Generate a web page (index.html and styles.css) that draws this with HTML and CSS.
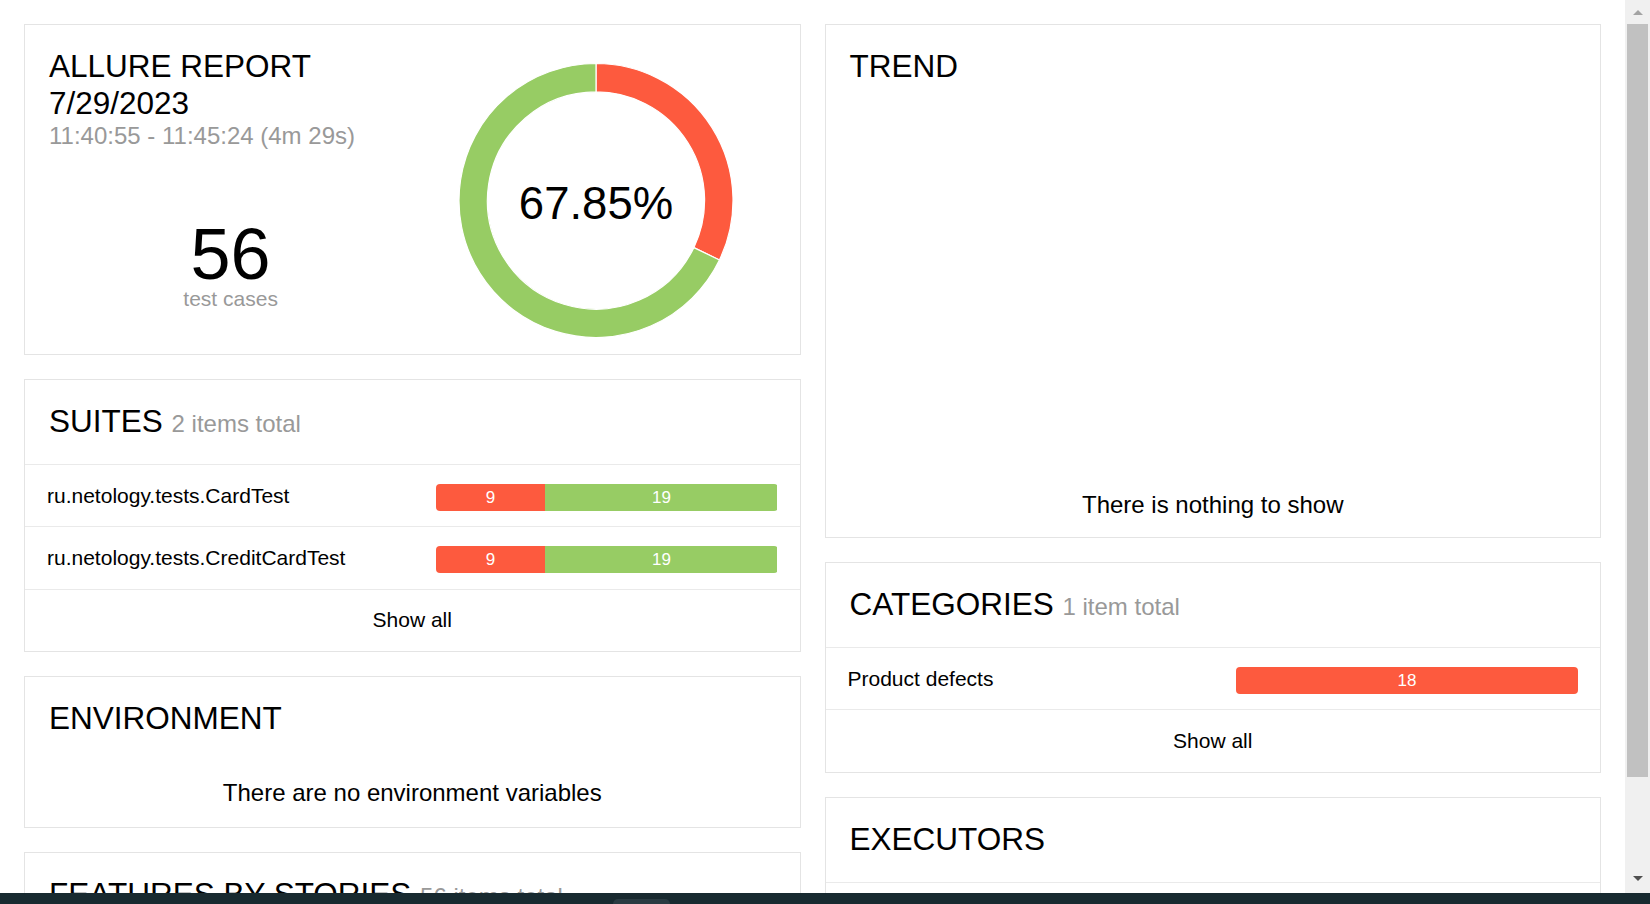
FILE: index.html
```html
<!DOCTYPE html>
<html lang="en">
<head>
<meta charset="utf-8">
<title>Allure Report</title>
<link rel="stylesheet" href="styles.css">
</head>
<body>
<div class="screen">
  <div class="viewport">
    <main class="content">
      <div class="col">
        <section class="card summary">
          <div class="summary__half summary__left">
            <h2 class="card__title">ALLURE REPORT<br>7/29/2023</h2>
            <div class="summary__time">11:40:55 - 11:45:24 (4m 29s)</div>
            <div class="summary__count">
              <div class="summary__num">56</div>
              <div class="summary__label">test cases</div>
            </div>
          </div>
          <div class="summary__half summary__right">
            <svg class="donut" width="363" height="290" viewBox="0 0 363 290">
              <path class="donut__failed" d="M184,15.5 A137,137 0 0,1 307.43,211.94 L281.85,199.62 A108.6,108.6 0 0,0 184,43.9 Z"/>
              <path class="donut__passed" d="M307.43,211.94 A137,137 0 1,1 184,15.5 L184,43.9 A108.6,108.6 0 1,0 281.85,199.62 Z"/>
              <text class="donut__text" x="184" y="171" text-anchor="middle">67.85%</text>
            </svg>
          </div>
        </section>

        <section class="card">
          <div class="card__head"><h2 class="card__title">SUITES <span class="card__sub">2 items total</span></h2></div>
          <div class="row">
            <div class="row__name">ru.netology.tests.CardTest</div>
            <div class="bar">
              <div class="bar__seg bar__seg--failed" style="width:32.14%">9</div>
              <div class="bar__seg bar__seg--passed" style="width:67.86%">19</div>
            </div>
          </div>
          <div class="row">
            <div class="row__name">ru.netology.tests.CreditCardTest</div>
            <div class="bar">
              <div class="bar__seg bar__seg--failed" style="width:32.14%">9</div>
              <div class="bar__seg bar__seg--passed" style="width:67.86%">19</div>
            </div>
          </div>
          <div class="row row--link">Show all</div>
        </section>

        <section class="card">
          <div class="card__head"><h2 class="card__title">ENVIRONMENT</h2></div>
          <div class="card__empty">There are no environment variables</div>
        </section>

        <section class="card">
          <div class="card__head"><h2 class="card__title">FEATURES BY STORIES <span class="card__sub">56 items total</span></h2></div>
          <div class="row">
            <div class="row__name">Credit card</div>
            <div class="bar">
              <div class="bar__seg bar__seg--failed" style="width:100%">1</div>
            </div>
          </div>
        </section>
      </div>

      <div class="col">
        <section class="card">
          <div class="card__head"><h2 class="card__title">TREND</h2></div>
          <div class="trend__body">There is nothing to show</div>
        </section>

        <section class="card">
          <div class="card__head"><h2 class="card__title">CATEGORIES <span class="card__sub">1 item total</span></h2></div>
          <div class="row">
            <div class="row__name">Product defects</div>
            <div class="bar">
              <div class="bar__seg bar__seg--failed" style="width:100%">18</div>
            </div>
          </div>
          <div class="row row--link">Show all</div>
        </section>

        <section class="card">
          <div class="card__head"><h2 class="card__title">EXECUTORS</h2></div>
          <div class="row row--link">There is no information about tests executors</div>
        </section>
      </div>
    </main>

    <div class="scrollbar">
      <div class="scrollbar__btn"><span class="scrollbar__up"></span></div>
      <div class="scrollbar__thumb"></div>
      <div class="scrollbar__track"></div>
      <div class="scrollbar__btn scrollbar__btn--down"><span class="scrollbar__down"></span></div>
    </div>
  </div>
  <div class="taskbar"><div class="taskbar__tab"></div></div>
</div>
</body>
</html>
```

FILE: styles.css
```css
* {
  box-sizing: border-box;
}

html,
body {
  margin: 0;
  padding: 0;
  background: #fff;
}

body {
  font-family: "Liberation Sans", Arial, sans-serif;
  color: #000;
  font-size: 21px;
  line-height: 28px;
}

.screen {
  width: 1650px;
  height: 904px;
  display: flex;
  flex-direction: column;
  overflow: hidden;
}

.viewport {
  height: 893px;
  display: flex;
  flex: none;
}

.content {
  flex: 1;
  min-width: 0;
  overflow: hidden;
  display: grid;
  grid-template-columns: 1fr 1fr;
  column-gap: 24px;
  padding: 24px 24px 0;
  align-items: start;
}

.col {
  display: flex;
  flex-direction: column;
  gap: 24px;
}

.card {
  background: #fff;
  border: 1px solid #e4e4e4;
}

.card__head {
  padding: 23px 24px 24px;
}

.card__title {
  margin: 0;
  font-size: 31.5px;
  line-height: 37px;
  font-weight: normal;
  color: #000;
}

.card__sub {
  font-size: 24px;
  line-height: 1;
  color: #999;
}

/* summary */
.summary {
  display: flex;
  padding: 23px 24px 16px;
}

.summary__half {
  flex: 1 1 0;
  min-width: 0;
}

.summary__time {
  font-size: 24px;
  line-height: 28px;
  color: #999;
  white-space: nowrap;
}

.summary__count {
  margin-top: 68px;
  text-align: center;
}

.summary__num {
  font-size: 72px;
  line-height: 72px;
}

.summary__label {
  font-size: 21px;
  line-height: 18px;
  color: #999;
}

.donut {
  display: block;
}

.donut__failed {
  fill: #fd5a3e;
  stroke: #fff;
  stroke-width: 1.2;
}

.donut__passed {
  fill: #97cc64;
  stroke: #fff;
  stroke-width: 1.2;
}

.donut__text {
  font-family: "Liberation Sans", Arial, sans-serif;
  font-size: 45.5px;
  fill: #000;
}

/* rows */
.row {
  border-top: 1px solid #eaeaea;
  height: 62.33px;
  padding: 0 22px;
  display: flex;
  align-items: center;
  justify-content: space-between;
  font-size: 21px;
  line-height: 28px;
}

.row__name {
  white-space: nowrap;
}

.row--link {
  justify-content: center;
}

.bar {
  width: 342px;
  height: 27px;
  flex: none;
  display: flex;
  border-radius: 4px;
  overflow: hidden;
  margin-top: 3px;
}

.bar__seg {
  height: 100%;
  color: #fff;
  font-size: 17px;
  line-height: 27px;
  text-align: center;
}

.bar__seg--failed {
  background: #fd5a3e;
}

.bar__seg--passed {
  background: #97cc64;
}

.card__empty {
  text-align: center;
  font-size: 24px;
  line-height: 28px;
  padding: 18px 0 20px;
}

.trend__body {
  height: 428px;
  display: flex;
  align-items: flex-end;
  justify-content: center;
  padding-bottom: 18px;
  font-size: 24px;
  line-height: 28px;
}

/* scrollbar */
.scrollbar {
  width: 25px;
  flex: none;
  background: #f0f0f0;
  display: flex;
  flex-direction: column;
  align-items: center;
}

.scrollbar__btn {
  height: 24px;
  width: 100%;
  display: flex;
  align-items: center;
  justify-content: center;
  flex: none;
}

.scrollbar__btn--down {
  margin-bottom: 3px;
}

.scrollbar__up {
  width: 0;
  height: 0;
  border-left: 5.5px solid transparent;
  border-right: 5.5px solid transparent;
  border-bottom: 5px solid #a3a3a3;
}

.scrollbar__down {
  width: 0;
  height: 0;
  border-left: 5.5px solid transparent;
  border-right: 5.5px solid transparent;
  border-top: 5px solid #505050;
}

.scrollbar__thumb {
  width: 21px;
  height: 753px;
  flex: none;
  background: #c1c1c1;
}

.scrollbar__track {
  flex: 1;
}

/* bottom bar */
.taskbar {
  height: 11px;
  flex: none;
  background: #182a30;
  display: flex;
  align-items: flex-end;
  padding-left: 613px;
}

.taskbar__tab {
  width: 57px;
  height: 5px;
  border-radius: 6px 6px 0 0;
  background: #2a3b42;
}
```
